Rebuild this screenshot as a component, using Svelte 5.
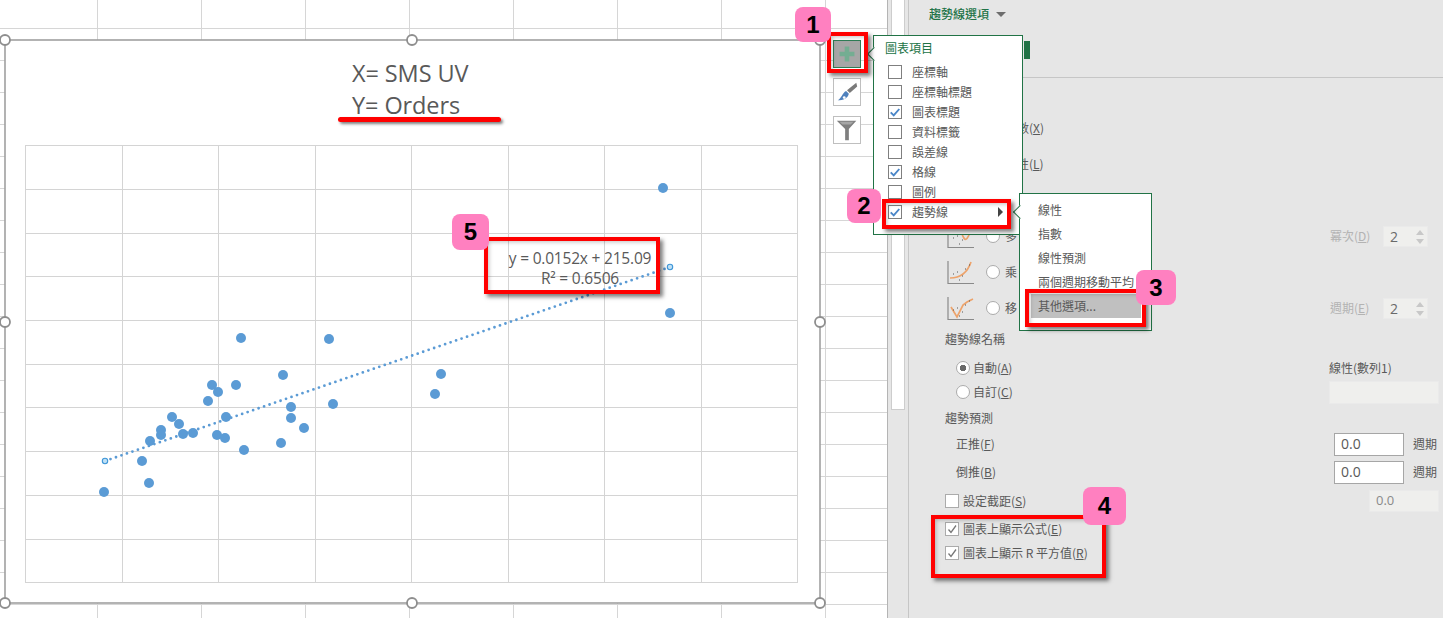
<script>
  const points = [[241,338],[329,339],[283,375],[212,385],[236,385],[218,392],[208,401],[291,407],[333,404],[291,418],[172,417],[226,417],[179,424],[304,428],[161,430],[161,435],[183,434],[193,433],[217,435],[225,438],[150,441],[281,443],[244,450],[142,461],[149,483],[104,492],[663,188],[670,313],[441,374],[435,394]];
  const vLines = [25.5,122.5,218.5,315.5,411.5,508.5,604.5,701.5,797.5];
  const hLines = [145.5,189.5,233.5,276.5,320.5,364.5,407.5,451.5,495.5,539.5,582.5];
  const handles = [[5,40],[412,40],[820,40],[5,322],[820,322],[5,603],[412,603],[820,603]];
  const chartItems = [
    { label: '座標軸', on: false }, { label: '座標軸標題', on: false }, { label: '圖表標題', on: true },
    { label: '資料標籤', on: false }, { label: '誤差線', on: false }, { label: '格線', on: true },
    { label: '圖例', on: false }, { label: '趨勢線', on: true, more: true }
  ];
  const trendItems = ['線性', '指數', '線性預測', '兩個週期移動平均', '其他選項...'];
  const types = [
    { name: '指數', key: 'X' }, { name: '線性', key: 'L' }, { name: '' },
    { name: '多', icon: 'M4 7C8 0 12 2 15 10S20 18 25 3', right: '冪次', rkey: 'D' },
    { name: '乘', icon: 'M3 18C12 18 20 14 24 2' },
    { name: '移', icon: 'M4 11L10 21L16 9L20 6L26 3', right: '週期', rkey: 'E' }
  ];
</script>

<div class="page">
  <div class="sheet">
    <div class="chart">
      <svg class="plot" viewBox="5 40 815 563" width="815" height="563">
        <rect x="5" y="40" width="815" height="563" class="frame" />
        {#each vLines as x}<line x1={x} x2={x} y1="145" y2="583" class="grid" />{/each}
        {#each hLines as y}<line x1="25" x2="798" y1={y} y2={y} class="grid" />{/each}
        {#each points as p}<circle cx={p[0]} cy={p[1]} r="5" class="dot" />{/each}
        <line x1="105" y1="461" x2="670" y2="267" class="trend" />
        <circle cx="105" cy="461" r="2.700" class="end" />
        <circle cx="670" cy="267" r="2.700" class="end" />
        {#each handles as h}<circle cx={h[0]} cy={h[1]} r="5" class="handle" />{/each}
      </svg>
      <div class="title">X= SMS UV<br />Y= Orders</div>
      <div class="equation">y = 0.0152x + 215.09<br />R² = 0.6506</div>
    </div>

    <div class="tool plus"><svg viewBox="0 0 28 28" width="26" height="26"><path d="M11.500 6h5v5.500h5.500v5h-5.500v5.500h-5v-5.500h-5.500v-5h5.500z" fill="#74ad92" /></svg></div>
    <div class="tool brush"><svg viewBox="0 0 28 28" width="26" height="26"><path d="M24 4L25 8L17 15L14 12Z" fill="#7a7a7a" /><path d="M13 13L16 16C15 21 10 23 4 23C8 21 9 15 13 13Z" fill="#4f81bd" /><circle cx="11" cy="20" r="1.500" fill="#fff" /></svg></div>
    <div class="tool filter"><svg viewBox="0 0 28 28" width="26" height="26"><path d="M3 4H24L16 13V25H12V13Z" fill="#7f7f7f" /><path d="M6 5H21L18 8H9Z" fill="#a6a6a6" /></svg></div>
  </div>

  <div class="scrollbar"><div class="thumb"></div></div>

  <div class="panel">
    <div class="head"><span>趨勢線選項</span><i class="caret"></i></div>
    <div class="tabs"><div class="tabmark"></div></div>

    <div class="types">
      {#each types as t}
        <div class="type">
          <svg class="ticon" viewBox="0 0 28 25" width="28" height="25">
            {#if t.icon}
              <path d={t.icon} fill="none" stroke="#eda36b" stroke-width="1.700" />
              <path d="M6 14h1M10 12h1M15 16h1M18 9h1M22 5h1M12 20h1" stroke="#555" stroke-width="1" />
            {/if}
            <path d="M1 1V23.500H27" fill="none" stroke="#8a8a8a" stroke-width="1.200" />
          </svg>
          <span class="radio"></span>
          <span class="tname">{t.name}{#if t.key}(<u>{t.key}</u>){/if}</span>
          {#if t.right}
            <span class="off rlabel">{t.right}(<u>{t.rkey}</u>)</span>
            <span class="spin">2<i class="ups"></i><i class="downs"></i></span>
          {/if}
        </div>
      {/each}
    </div>

    <div class="row h1">趨勢線名稱</div>
    <div class="row split s5">
      <span class="in"><span class="radio sel"></span>自動(<u>A</u>)</span>
      <span>線性(數列1)</span>
    </div>
    <div class="row split">
      <span class="in"><span class="radio"></span>自訂(<u>C</u>)</span>
      <span class="field name"></span>
    </div>
    <div class="row s2">趨勢預測</div>
    <div class="row split s2">
      <span class="ind">正推(<u>F</u>)</span>
      <span class="pair"><span class="num">0.0</span>週期</span>
    </div>
    <div class="row split s4">
      <span class="ind">倒推(<u>B</u>)</span>
      <span class="pair"><span class="num">0.0</span>週期</span>
    </div>
    <div class="row split s5">
      <span class="chk"><span class="box"></span>設定截距(<u>S</u>)</span>
      <span class="field zero">0.0</span>
    </div>
    <div class="row s4"><span class="chk"><span class="box"><svg viewBox="0 0 12 12" width="12" height="12"><path d="M2.500 6.500L5 9.500L10 2.500" fill="none" stroke="#777" stroke-width="1.300" /></svg></span>圖表上顯示公式(<u>E</u>)</span></div>
    <div class="row"><span class="chk"><span class="box"><svg viewBox="0 0 12 12" width="12" height="12"><path d="M2.500 6.500L5 9.500L10 2.500" fill="none" stroke="#777" stroke-width="1.300" /></svg></span>圖表上顯示 R 平方值(<u>R</u>)</span></div>
  </div>

  <div class="menu items">
    <i class="nub nub1"></i>
    <div class="mtitle">圖表項目</div>
    {#each chartItems as it}
      <div class="mrow">
        <span class="mbox">{#if it.on}<svg viewBox="0 0 14 14" width="12" height="12"><path d="M2 7.500L5.500 11L12 3.500" fill="none" stroke="#4a86c8" stroke-width="2.200" /></svg>{/if}</span>
        <span>{it.label}</span>
        {#if it.more}<i class="rarrow"></i>{/if}
      </div>
    {/each}
  </div>

  <div class="menu sub">
    <i class="nub nub2"></i>
    {#each trendItems as t, i}
      <div class="srow" class:active={i === 4}>{t}</div>
    {/each}
  </div>

  <div class="mark m1"></div>
  <div class="mark m2"></div>
  <div class="mark m3"></div>
  <div class="mark m4"></div>
  <div class="mark m5"></div>
  <div class="stroke"></div>
  <div class="tag t1">1</div>
  <div class="tag t2">2</div>
  <div class="tag t3">3</div>
  <div class="tag t4">4</div>
  <div class="tag t5">5</div>
</div>

<style>
  :global(body) { margin: 0; background: #fff; }
  .page { position: relative; width: 1443px; height: 618px; overflow: hidden; display: flex; font: 12px/1 "Noto Sans CJK TC", "Noto Sans", sans-serif; color: #595959; }

  .sheet { position: relative; width: 887px; flex: none; border-right: 1px solid #b4b4b4; background-color: #fff;
    background-image: repeating-linear-gradient(90deg, transparent 0 97px, #d6d6d6 97px 98px, transparent 98px 104px), repeating-linear-gradient(180deg, transparent 0 28px, #d6d6d6 28px 29px, transparent 29px 32px); }

  .chart { position: absolute; left: 5px; top: 40px; width: 815px; height: 563px; background: #fff; }
  .plot { display: block; overflow: visible; }
  .frame { fill: #fff; stroke: #a0a0a0; stroke-width: 1.600; }
  .grid { stroke: #d4d4d4; stroke-width: 1; }
  .dot { fill: #5b9bd5; }
  .trend { stroke: #5b9bd5; stroke-width: 2.800; stroke-linecap: round; stroke-dasharray: 0 5.800; }
  .end { fill: #bfe0f5; stroke: #3f96d8; stroke-width: 1.100; }
  .handle { fill: #fff; stroke: #8e8e8e; stroke-width: 1.800; }
  .title { position: absolute; left: 347px; top: 17px; font: 23.500px/32px "Open Sans", sans-serif; letter-spacing: -0.100px; color: #595959; white-space: nowrap; }
  .equation { position: absolute; left: 495px; top: 208px; width: 160px; text-align: center; font: 15.500px/20px "Open Sans", sans-serif; letter-spacing: -0.200px; color: #595959; white-space: nowrap; }

  .tool { position: absolute; left: 833px; width: 26px; height: 26px; border: 1.500px solid #bfbfbf; background: #fff; display: flex; }
  .plus { top: 40px; background: #a6a6a6; border-color: #2e7d56; }
  .brush { top: 78px; }
  .filter { top: 116px; }

  .scrollbar { width: 21px; flex: none; background: #e6e6e6; border-right: 1px solid #c6c6c6; box-sizing: border-box; }
  .thumb { width: 14px; height: 410px; margin-left: 3px; background: #fff; border: 1px solid #cdcdcd; box-sizing: border-box; border-top: 0; }

  .panel { flex: 1; background: #e6e6e6; display: flex; flex-direction: column; min-width: 0; }
  .head { height: 28px; padding-left: 20px; display: flex; align-items: center; gap: 7px; color: #217346; font-weight: 500; }
  .caret { width: 0; height: 0; border: 5px solid transparent; border-top: 5px solid #6d6d6d; border-bottom: 0; }
  .tabs { height: 50px; border-bottom: 1px solid #c6c6c6; box-sizing: border-box; padding: 13px 0 0 115px; }
  .tabmark { width: 6px; height: 18px; background: #217346; }

  .types { margin-top: 32px; padding-left: 38px; }
  .type { height: 36px; display: flex; align-items: center; position: relative; }
  .ticon { flex: none; }
  .radio { width: 12px; height: 12px; border: 1px solid #ababab; border-radius: 50%; background: #fff; flex: none; display: inline-block; box-sizing: content-box; }
  .type .radio { margin-left: 11px; }
  .tname { margin-left: 5px; width: 325px; flex: none; white-space: nowrap; }
  .off { color: #b3b3b3; }
  .rlabel { width: 53px; flex: none; }
  .spin { width: 45px; height: 21px; box-sizing: border-box; background: #efefed; border: 1px solid #eaeaea; color: #6a6a6a; padding: 3px 0 0 6px; font: 14px/1 "Open Sans", sans-serif; position: relative; flex: none; }
  .ups, .downs { position: absolute; right: 3px; width: 0; height: 0; border: 4px solid transparent; }
  .ups { top: 3px; border-top: 0; border-bottom: 5px solid #c8c8c8; }
  .downs { bottom: 2px; border-bottom: 0; border-top: 5px solid #c8c8c8; }

  .row { height: 24px; padding-left: 36px; display: flex; align-items: center; white-space: nowrap; flex: none; }
  .h1 { margin-top: 1px; }
  .s2 { margin-top: 2px; }
  .s4 { margin-top: 4px; }
  .s5 { margin-top: 5px; }
  .split { display: grid; grid-template-columns: 384px 1fr; align-items: center; }
  .in { padding-left: 11px; display: flex; align-items: center; }
  .in .radio { margin-right: 3px; }
  .sel { background: radial-gradient(circle, #6a6a6a 0 3px, #fff 3.500px); }
  .ind { padding-left: 11px; }
  .field { display: block; background: #efefed; border: 1px solid #eaeaea; box-sizing: border-box; }
  .name { width: 110px; height: 23px; }
  .zero { width: 70px; height: 22px; margin-left: 40px; color: #8a8a8a; padding: 3px 0 0 6px; font: 13px/1 "Open Sans", sans-serif; }
  .pair { display: flex; align-items: center; gap: 9px; margin-left: 5px; }
  .num { width: 70px; height: 23px; box-sizing: border-box; border: 1px solid #a6a6a6; background: #fff; padding: 3px 0 0 6px; font: 14px/1 "Open Sans", sans-serif; }
  .chk { display: flex; align-items: center; }
  .box { width: 12px; height: 12px; border: 1px solid #ababab; background: #fff; margin-right: 4px; display: block; box-sizing: content-box; }
  .box svg { display: block; }

  .menu { position: absolute; background: #fff; border: 1px solid #217346; box-sizing: border-box; }
  .items { left: 873px; top: 35px; width: 150px; height: 200px; padding-top: 4px; }
  .sub { left: 1019px; top: 193px; width: 133px; height: 138px; padding-top: 4px; }
  .nub { position: absolute; width: 9px; height: 9px; background: #fff; border-left: 1px solid #217346; border-bottom: 1px solid #217346; transform: rotate(45deg); }
  .nub1 { left: -5px; top: 13px; }
  .nub2 { left: -5px; top: 13px; }
  .mtitle { height: 16px; padding-left: 11px; color: #217346; display: flex; align-items: center; margin-bottom: 6px; }
  .mrow { height: 20px; padding-left: 14px; display: flex; align-items: center; position: relative; }
  .mbox { width: 12px; height: 12px; border: 1px solid #7f7f7f; margin-right: 10px; flex: none; display: block; }
  .mbox svg { display: block; }
  .rarrow { position: absolute; left: 124px; top: 5px; width: 0; height: 0; border: 5px solid transparent; border-left: 5px solid #444; border-right: 0; }
  .srow { height: 24px; padding-left: 18px; display: flex; align-items: center; }
  .active { background: #c0c0c0; margin: 0 10px 0 11px; padding-left: 7px; }

  .mark { position: absolute; border: 4px solid #f00; box-sizing: border-box; box-shadow: 3px 3px 4px rgba(0,0,0,.5), inset 3px 3px 4px -2px rgba(0,0,0,.25); }
  .m1 { left: 827px; top: 32px; width: 41px; height: 41px; }
  .m2 { left: 882px; top: 199px; width: 129px; height: 30px; }
  .m3 { left: 1025px; top: 289px; width: 121px; height: 38px; }
  .m4 { left: 931px; top: 515px; width: 175px; height: 63px; }
  .m5 { left: 484px; top: 237px; width: 176px; height: 57px; }
  .stroke { position: absolute; left: 338px; top: 117px; width: 163px; height: 5px; background: #f00; border-radius: 3px; box-shadow: 2px 2px 3px rgba(0,0,0,.5); }
  .tag { position: absolute; background: #ff80c0; border-radius: 8px; color: #000; font: 700 24px/1 "Liberation Sans", sans-serif; display: flex; align-items: center; justify-content: center; }
  .t1 { left: 795px; top: 7px; width: 36px; height: 35px; }
  .t2 { left: 847px; top: 189px; width: 34px; height: 34px; }
  .t3 { left: 1136px; top: 270px; width: 40px; height: 35px; }
  .t4 { left: 1083px; top: 487px; width: 43px; height: 38px; }
  .t5 { left: 452px; top: 214px; width: 37px; height: 36px; }
</style>
